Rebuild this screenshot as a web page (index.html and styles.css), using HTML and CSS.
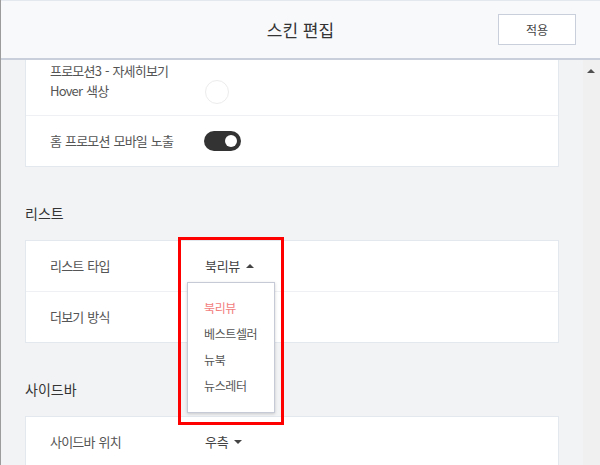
FILE: index.html
```html
<!DOCTYPE html>
<html lang="ko">
<head>
<meta charset="utf-8">
<title>스킨 편집</title>
<link rel="stylesheet" href="styles.css">
</head>
<body>
<div class="app">
  <header class="topbar">
    <h1 class="title">스킨 편집</h1>
    <button class="apply" type="button">적용</button>
  </header>
  <div class="body">
    <main class="content">
      <div class="scroller">
        <section class="card">
          <div class="row row-tall">
            <div class="label">프로모션3 - 자세히보기<br>Hover 색상</div>
            <div class="control control-bottom"><span class="swatch"></span></div>
          </div>
          <div class="row">
            <div class="label">홈 프로모션 모바일 노출</div>
            <div class="control"><span class="toggle"><span class="knob"></span></span></div>
          </div>
        </section>

        <h2 class="section-title">리스트</h2>
        <section class="card">
          <div class="row">
            <div class="label">리스트 타입</div>
            <div class="control">
              <div class="select open">
                <span class="value">북리뷰</span><span class="caret caret-up"></span>
                <ul class="menu">
                  <li class="item active">북리뷰</li>
                  <li class="item">베스트셀러</li>
                  <li class="item">뉴북</li>
                  <li class="item">뉴스레터</li>
                </ul>
                <span class="highlight"></span>
              </div>
            </div>
          </div>
          <div class="row">
            <div class="label">더보기 방식</div>
            <div class="control"></div>
          </div>
        </section>

        <h2 class="section-title">사이드바</h2>
        <section class="card">
          <div class="row">
            <div class="label">사이드바 위치</div>
            <div class="control">
              <div class="select">
                <span class="value">우측</span><span class="caret caret-down"></span>
              </div>
            </div>
          </div>
        </section>
      </div>
    </main>
    <div class="scrollbar"><span class="arrow-up"></span></div>
  </div>
</div>
</body>
</html>
```

FILE: styles.css
```css
* {
  box-sizing: border-box;
  margin: 0;
  padding: 0;
}

html, body {
  width: 600px;
  height: 465px;
  overflow: hidden;
}

body {
  font-family: "Noto Sans CJK KR", "Noto Sans", sans-serif;
  color: #555;
  background: #f2f3f5;
}

.app {
  height: 465px;
  display: flex;
  flex-direction: column;
  border-left: 1px solid #9c9c9c;
}

.topbar {
  flex: none;
  height: 60px;
  display: grid;
  grid-template-columns: 1fr auto 1fr;
  align-items: center;
  background: #f8f9fb;
  border-top: 1px solid #e3e7ee;
  border-bottom: 2px solid #c9d0db;
}

.title {
  grid-column: 2;
  font-size: 17px;
  font-weight: 400;
  color: #333;
  line-height: 24px;
}

.apply {
  grid-column: 3;
  justify-self: end;
  margin-right: 24px;
  width: 78px;
  height: 31px;
  background: #fff;
  border: 1px solid #c9d0db;
  font-family: inherit;
  font-size: 12px;
  color: #444;
  cursor: pointer;
}

.body {
  flex: 1;
  display: flex;
  overflow: hidden;
}

.content {
  flex: 1;
  overflow: hidden;
  padding: 0 24px;
}

.scroller {
  margin-top: -16px;
}

.card {
  background: #fff;
  border: 1px solid #e3e7ee;
}

.row {
  display: flex;
  align-items: center;
  min-height: 50px;
  padding: 15px 24px;
}

.row-tall {
  padding: 16px 24px 14px;
}

.row + .row {
  border-top: 1px solid #eef0f3;
}

.label {
  width: 155px;
  flex: none;
  font-size: 13px;
  line-height: 20px;
  letter-spacing: -0.8px;
  word-spacing: 1px;
  color: #555;
}

.control {
  flex: 1;
  display: flex;
  align-items: center;
  font-size: 13px;
  line-height: 20px;
  color: #444;
}

.control-bottom {
  align-self: flex-end;
}

.swatch {
  width: 24px;
  height: 24px;
  margin-bottom: -3px;
  border-radius: 50%;
  border: 1px solid #ececec;
  background: #fff;
}

.toggle {
  position: relative;
  width: 37px;
  height: 20px;
  margin-left: -1px;
  border-radius: 10px;
  background: #333;
}

.knob {
  position: absolute;
  right: 4px;
  top: 4px;
  width: 12px;
  height: 12px;
  border-radius: 50%;
  background: #fff;
}

.section-title {
  font-size: 14px;
  font-weight: 400;
  color: #333;
  line-height: 20px;
  padding: 36px 0 17px;
}

.select {
  position: relative;
  display: flex;
  align-items: center;
  letter-spacing: -0.3px;
}

.caret {
  width: 0;
  height: 0;
  margin-left: 6px;
  border-left: 4px solid transparent;
  border-right: 4px solid transparent;
}

.caret-up {
  border-bottom: 4px solid #444;
}

.caret-down {
  border-top: 4px solid #444;
}

.menu {
  position: absolute;
  z-index: 5;
  left: -18px;
  top: calc(100% + 6px);
  width: 88px;
  padding: 12px 0 13px 16px;
  list-style: none;
  background: #fff;
  border: 1px solid #c5cad6;
  box-shadow: 0 1px 3px rgba(0, 0, 0, 0.18);
}

.item {
  font-size: 12px;
  line-height: 26px;
  letter-spacing: -0.4px;
  color: #555;
}

.item.active {
  color: #f27c7c;
}

.highlight {
  position: absolute;
  z-index: 6;
  left: -27px;
  top: -19px;
  width: 106px;
  height: 188px;
  border: 3px solid #ff0000;
  pointer-events: none;
}

.scrollbar {
  flex: none;
  width: 17px;
  background: #f0f0f0;
  position: relative;
}

.arrow-up {
  position: absolute;
  left: 4px;
  top: 9px;
  width: 0;
  height: 0;
  border-left: 4px solid transparent;
  border-right: 4px solid transparent;
  border-bottom: 4px solid #505050;
}
```
